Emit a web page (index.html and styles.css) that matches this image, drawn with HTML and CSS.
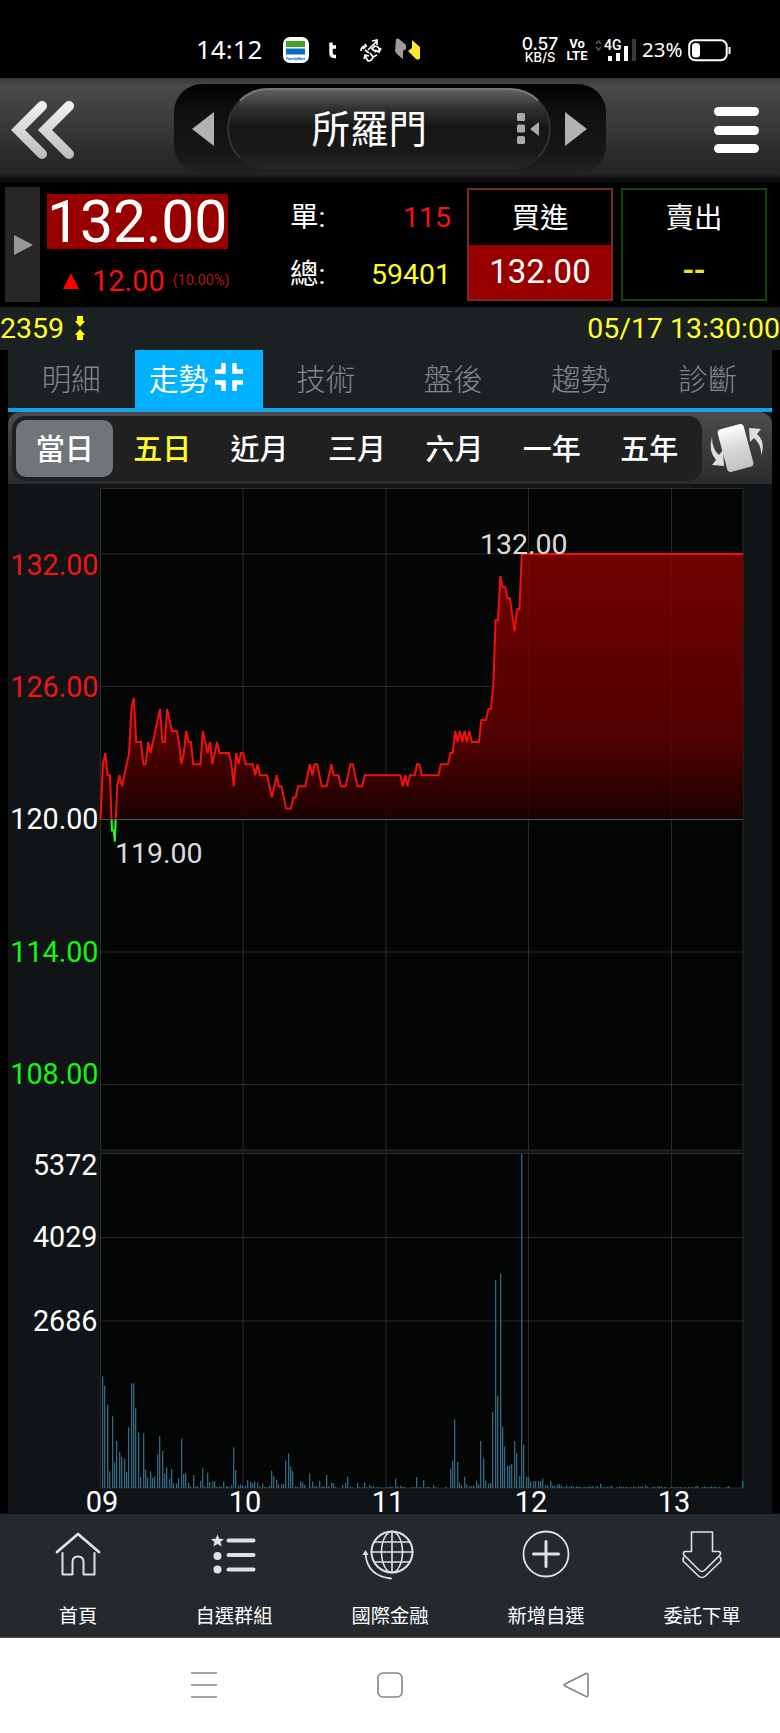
FILE: index.html
```html
<!DOCTYPE html>
<html lang="zh-Hant">
<head>
    <meta charset="utf-8">
    <title>所羅門 2359</title>
    <link rel="stylesheet" href="styles.css">
</head>
<body>
    <div class="status-bar">
        <span class="clock">14:12</span>
        <svg class="status-apps" width="150" height="30" viewBox="0 0 150 30">
            <rect x="2" y="2" width="26" height="26" rx="7" fill="#fff"/>
            <rect x="5" y="6" width="19" height="6" fill="#3fa523"/>
            <rect x="5" y="13.500" width="19" height="6" fill="#0a6fc0"/>
            <text x="5" y="25" class="app-name" textLength="19">FamilyMart</text>
            <path d="M50 7.500v10.500q0 3.500 3.500 3.500h1.500M50 12h5" fill="none" stroke="#fff" stroke-width="3.400"/>
            <g fill="none" stroke="#fff" stroke-width="1.700">
                <path d="M80 16q0-5 5-5l-1-2M85 11l-3 3"/>
                <path d="M87 15l9-9M91 6l5-1v5M84 15l4 3"/>
                <path d="M98 16q1-4-4-5l-3 3 4 3M100 13l-2 4-4-2"/>
                <path d="M84 21l3 5q4 0 5-4l4-2M83 24l1-4 4 1M89 18l3 4"/>
            </g>
            <path d="M115 4q2-1 3 0l7 6v4l-3 2v8q-7-5-8-8z" fill="#9b9b9b"/>
            <path d="M131 5l8 7v11q-1 3-4 1l-6-6-2-2 4-3z" fill="#fbe72c"/>
        </svg>
        <div class="net-speed"><span>0.57</span><span class="unit">KB/S</span></div>
        <div class="volte"><span>Vo</span><span>LTE</span></div>
        <svg class="signal" width="42" height="26" viewBox="0 0 42 26">
            <path d="M1 7l2.500-3 2.500 3M1 10l2.500 3 2.500-3" fill="none" stroke="#555" stroke-width="1.500"/>
            <text x="9" y="13" class="net-type">4G</text>
            <path d="M15 24v-5M23 24v-8M31 24V9" stroke="#fff" stroke-width="4"/>
            <path d="M39 24V2" stroke="#3a3a3a" stroke-width="4"/>
        </svg>
        <span class="battery-text">23%</span>
        <svg class="battery" width="44" height="24" viewBox="0 0 44 24">
            <rect x="1.200" y="2.200" width="37.500" height="20" rx="6" fill="none" stroke="#fff" stroke-width="2"/>
            <rect x="4" y="5" width="8" height="14.500" rx="3.500" fill="#fff"/>
            <path d="M41.500 9v7" stroke="#fff" stroke-width="2"/>
        </svg>
    </div>

    <div class="header">
        <svg class="back" width="64" height="62" viewBox="0 0 64 62">
            <defs>
                <linearGradient id="metal" x1="0" y1="0" x2="0" y2="62" gradientUnits="userSpaceOnUse">
                    <stop offset="0" stop-color="#f6f6f6"/>
                    <stop offset="1" stop-color="#b9b9b9"/>
                </linearGradient>
            </defs>
            <path d="M31 7L7 31l24 24M58 7L34 31l24 24" fill="none" stroke="url(#metal)" stroke-width="10" stroke-linecap="round"/>
        </svg>
        <div class="stock-switch">
            <svg width="22" height="34" viewBox="0 0 22 34"><path d="M22 0v34L0 17z" fill="#b2b2b2"/></svg>
            <div class="stock-name">
                <span>所羅門</span>
                <svg class="list-icon" width="24" height="34" viewBox="0 0 24 34">
                    <rect x="1" y="1" width="8" height="8" rx="1.500" fill="#aaa"/>
                    <rect x="1" y="12.500" width="8" height="8" rx="1.500" fill="#aaa"/>
                    <rect x="1" y="24" width="8" height="8" rx="1.500" fill="#aaa"/>
                    <path d="M23 10v14l-9-7z" fill="#aaa"/>
                </svg>
            </div>
            <svg width="22" height="34" viewBox="0 0 22 34"><path d="M0 0v34l22-17z" fill="#b2b2b2"/></svg>
        </div>
        <div class="menu"><i></i><i></i><i></i></div>
    </div>

    <div class="quote">
        <div class="expander">
            <svg width="19" height="20" viewBox="0 0 19 20"><path d="M0 0v20l19-10z" fill="#999"/></svg>
        </div>
        <div class="price">
            <div class="price-now">132.00</div>
            <div class="price-change">
                <svg width="16" height="16" viewBox="0 0 16 16"><path d="M8 0l8 16H0z" fill="#f00"/></svg>
                <span class="diff">12.00</span>
                <span class="percent">(10.00%)</span>
            </div>
        </div>
        <div class="volume-info">
            <div class="row"><span>單:</span><span class="red">115</span></div>
            <div class="row"><span>總:</span><span class="yellow">59401</span></div>
        </div>
        <div class="order buy">
            <div class="order-title">買進</div>
            <div class="order-price">132.00</div>
        </div>
        <div class="order sell">
            <div class="order-title">賣出</div>
            <div class="order-price">--</div>
        </div>
    </div>

    <div class="info-strip">
        <span>2359</span>
        <svg width="10" height="24" viewBox="0 0 10 24">
            <path d="M2 0h6v5h2l-5 6-5-6h2zM2 24h6v-5h2l-5-6-5 6h2z" fill="#ff0"/>
        </svg>
        <span class="time">05/17 13:30:00</span>
    </div>

    <div class="main">
        <div class="tabs">
            <div class="tab">明細</div>
            <div class="tab active">走勢
                <svg width="28" height="28" viewBox="0 0 28 28">
                    <path d="M0 8.500h8.500V0M19.500 0v8.500h8.500M0 19.500h8.500v8.500M19.500 28v-8.500h8.500" fill="none" stroke="#fff" stroke-width="4.500"/>
                </svg>
            </div>
            <div class="tab">技術</div>
            <div class="tab">盤後</div>
            <div class="tab">趨勢</div>
            <div class="tab">診斷</div>
        </div>
        <div class="range-bar">
            <div class="ranges">
                <div class="range selected">當日</div>
                <div class="range yellow">五日</div>
                <div class="range">近月</div>
                <div class="range">三月</div>
                <div class="range">六月</div>
                <div class="range">一年</div>
                <div class="range">五年</div>
            </div>
            <svg class="rotate" width="56" height="52" viewBox="0 0 56 52">
                <defs>
                    <linearGradient id="card" x1="0" y1="0" x2="0" y2="1">
                        <stop offset="0" stop-color="#fff"/>
                        <stop offset="0.500" stop-color="#d8d8d8"/>
                        <stop offset="1" stop-color="#c2c2c2"/>
                    </linearGradient>
                </defs>
                <rect x="14" y="4" width="27" height="44" rx="4" fill="url(#card)" transform="rotate(-15 27.500 26)"/>
                <path d="M4 15Q0 29 8 38l-4 5 12 1-1-16-4 5Q4 27 4 15z" fill="#dedede"/>
                <path d="M53 34Q58 20 49 12l4-5-12-1 1 14 4-4q8 7 7 18z" fill="#dedede"/>
            </svg>
        </div>
        <svg id="chart" class="chart" width="764" height="1029" viewBox="0 0 764 1029">
            <defs>
                <linearGradient id="upFill" x1="0" y1="70" x2="0" y2="335.500" gradientUnits="userSpaceOnUse">
                    <stop offset="0" stop-color="#840000"/>
                    <stop offset="0.700" stop-color="#5c0000"/>
                    <stop offset="1" stop-color="#1e0000"/>
                </linearGradient>
                <clipPath id="above"><rect x="90" y="0" width="650" height="335.500"/></clipPath>
                <clipPath id="below"><rect x="90" y="335.500" width="650" height="330"/></clipPath>
            </defs>
            <rect class="plot" x="92.500" y="4.500" width="642.500" height="661.500"/>
            <rect class="plot" x="92.500" y="669.500" width="642.500" height="334.500"/>
            <g id="grid"></g>
            <g id="price"></g>
            <g id="volume"></g>
            <g id="labels"></g>
        </svg>
    </div>

    <div class="bottom-nav">
        <div class="nav-item">
            <svg width="50" height="50" viewBox="0 0 50 50">
                <path d="M4 22L25 4l21 18" stroke-width="2.800"/>
                <path d="M9.500 23v21.500h10V32q0-5.500 5.500-5.500t5.500 5.500v12.500h11V23" stroke-width="2"/>
            </svg>
            <span>首頁</span>
        </div>
        <div class="nav-item">
            <svg width="50" height="50" viewBox="0 0 50 50">
                <path class="solid" d="M8.500 4.500l1.800 4.200 4.700.3-3.500 3 1.200 4.600-4.200-2.600-4.200 2.600 1.200-4.600-3.500-3 4.700-.3z"/>
                <circle class="solid" cx="8.500" cy="26" r="4"/>
                <circle class="solid" cx="8.500" cy="39.500" r="4"/>
                <path d="M19.500 10.500h25M19.500 25h25M19.500 39.500h25" stroke-width="4"/>
            </svg>
            <span>自選群組</span>
        </div>
        <div class="nav-item">
            <svg width="54" height="50" viewBox="0 0 54 50">
                <circle cx="29" cy="22" r="20.500" stroke-width="2"/>
                <ellipse cx="29" cy="22" rx="10.500" ry="20.500"/>
                <path d="M29 1.500v41M8.500 22h41M11.500 12h35M11.500 32h35"/>
                <path d="M2.500 23.500q1.500 22.500 25.500 25" stroke-width="1.800"/>
                <path class="solid" d="M2.500 20l3 5h-6z"/>
            </svg>
            <span>國際金融</span>
        </div>
        <div class="nav-item">
            <svg width="50" height="50" viewBox="0 0 50 50">
                <circle cx="25" cy="24" r="22.500" stroke-width="1.800"/>
                <path d="M25 11.500v25M12.500 24h25" stroke-width="3"/>
            </svg>
            <span>新增自選</span>
        </div>
        <div class="nav-item">
            <svg width="50" height="50" viewBox="0 0 50 50">
                <path d="M14.500 2h21v19.500h6.500q3 1 .5 4L28 40q-3 3-6 0L7.500 25.500q-2.500-3 .5-4h6.500z"/>
                <path d="M7 27q-2 3 0 5l14.500 14q3.500 3 7 0l14.500-14q2-2 0-5"/>
            </svg>
            <span>委託下單</span>
        </div>
    </div>

    <div class="system-nav">
        <svg width="28" height="28" viewBox="0 0 28 28"><path d="M1 2h26M1 14h26M1 26h26"/></svg>
        <svg width="28" height="28" viewBox="0 0 28 28"><rect x="2" y="2" width="24" height="24" rx="5"/></svg>
        <svg width="28" height="28" viewBox="0 0 28 28"><path d="M24 2.500L3 13q-2 1 0 2l21 10.500q2 .5 2-1.500V4q0-2-2-1.500z"/></svg>
    </div>

    <script>
        const left = 92.5
        const right = 735
        const perMinute = 2.38
        const baseY = 335.5
        const perPoint = 22.13
        const volumeBase = 1004

        // [minutes since 09:00, price]
        const prices = [
            [0, 120], [1, 122.5], [2, 123], [3, 122], [4, 122], [4.8, 119.5], [5.6, 119.5], [6, 119], [7, 121.5],
            [8, 122], [9, 121.5], [10, 122], [12, 123], [13, 125], [14, 125.5], [15, 123.5], [17, 123.5],
            [18, 122.5], [19, 122.5], [20, 123.5], [21, 123], [25, 125], [26, 123.5], [27, 123.5], [28, 125],
            [30, 124], [32, 124], [33, 123.5], [34, 122.5], [35, 123], [36, 124], [37, 123.5], [38, 123.5],
            [39, 122.5], [42, 122.5], [43, 124], [45, 123], [46, 123.5], [47, 122.5], [49, 123.5], [50, 123],
            [54, 123], [55, 122.5], [56, 121.5], [57, 123], [58, 122.5], [59, 123], [60, 123], [61, 122.5],
            [64, 122.5], [65, 122], [66, 122.5], [67, 122], [70, 122], [72, 121], [74, 122], [75, 121.5],
            [76, 121.5], [78, 120.5], [80, 120.5], [81, 121], [82, 121], [83, 121.5], [86, 121.5], [88, 122.5],
            [89, 122], [90, 122.5], [91, 122.5], [93, 121.5], [95, 121.5], [97, 122.5], [98, 122], [100, 122],
            [101, 121.5], [103, 121.5], [105, 122.5], [106, 122.5], [108, 121.5], [110, 121.5], [111, 122],
            [126, 122], [127, 121.5], [128, 122], [129, 121.5], [130, 122], [132, 122], [133, 122.5],
            [134, 122.5], [135, 122], [142, 122], [143, 122.5], [146, 122.5], [147, 123], [148, 123],
            [149, 124], [150, 123.5], [151, 124], [152, 123.5], [153, 124], [154, 123.5], [155, 124],
            [156, 123.5], [159, 123.5], [160, 124.5], [162, 124.5], [163, 125], [164, 125], [165, 126],
            [166, 129], [167, 129], [168, 131], [169, 130.5], [170, 130.5], [171, 130], [172, 130],
            [174, 128.5], [175, 129.5], [176, 129.5], [177, 132], [270, 132]
        ]

        // one bar a minute, in thirds of a pixel
        const volumes = [
            335, 306, 250, 50, 215, 77, 141, 109, 94, 88, 48, 182, 314, 314, 239, 167, 33, 164, 55, 31,
            50, 31, 35, 101, 155, 111, 43, 62, 28, 57, 14, 14, 28, 148, 42, 44, 16, 5, 39, 5,
            5, 22, 59, 5, 46, 18, 20, 20, 3, 5, 3, 19, 5, 5, 8, 122, 54, 7, 10, 7,
            7, 24, 19, 14, 19, 17, 5, 13, 3, 3, 7, 52, 35, 25, 11, 13, 11, 82, 104, 65,
            50, 5, 3, 20, 17, 9, 0, 43, 19, 5, 5, 22, 3, 5, 39, 5, 16, 14, 3, 0,
            0, 9, 16, 34, 3, 2, 0, 15, 3, 2, 17, 3, 10, 4, 5, 2, 3, 2, 0, 2,
            3, 5, 2, 28, 5, 7, 4, 3, 0, 0, 3, 3, 33, 3, 2, 24, 3, 3, 0, 9,
            3, 0, 0, 0, 4, 0, 58, 82, 206, 78, 16, 8, 34, 11, 6, 5, 7, 22, 11, 141,
            89, 22, 13, 15, 228, 624, 277, 642, 184, 124, 66, 68, 72, 141, 104, 35, 1003, 130, 34, 32,
            20, 20, 21, 21, 20, 28, 9, 7, 22, 7, 7, 11, 11, 6, 3, 7, 5, 6, 4, 5,
            4, 3, 3, 4, 5, 4, 5, 4, 5, 13, 3, 3, 4, 3, 7, 0, 3, 5, 4, 3,
            5, 0, 3, 4, 3, 5, 4, 5, 8, 4, 0, 3, 4, 5, 5, 4, 3, 2, 0, 3,
            2, 3, 2, 3, 2, 2, 3, 2, 3, 5, 6, 0, 3, 5, 2, 3, 5, 5, 3, 4,
            0, 0, 3, 6, 0, 0, 0, 0, 0, 20
        ]

        const x = m => left + m * perMinute
        const y = p => baseY - (p - 120) * perPoint

        function line(x1, y1, x2, y2, name) {
            return `<line class="${name}" x1="${x1}" y1="${y1}" x2="${x2}" y2="${y2}"/>`
        }

        function text(value, tx, ty, name) {
            return `<text class="${name}" x="${tx}" y="${ty}">${value}</text>`
        }

        function drawPrice() {
            const points = prices.map(([m, p]) => `${x(m).toFixed(1)},${y(p).toFixed(1)}`).join(' ')
            const area = `${left},${baseY} ${points} ${right},${baseY}`
            document.getElementById('price').innerHTML =
                `<g clip-path="url(#above)"><polygon points="${area}" fill="url(#upFill)" opacity="0.86"/>` +
                `<polyline class="up" points="${points}"/></g>` +
                `<g clip-path="url(#below)"><polygon points="${area}" fill="#084f0c"/>` +
                `<polyline class="down" points="${points}"/></g>` +
                line(left, baseY, right, baseY, 'base-line')
        }

        function drawVolume() {
            let html = ''
            volumes.forEach((v, i) => {
                const name = i === 269 ? 'bar last' : 'bar'
                const bx = Math.floor(x(i + 1) - 0.3)
                html += `<rect class="${name}" x="${bx}" y="${volumeBase - v / 3}" width="1.3" height="${v / 3}"/>`
            })
            document.getElementById('volume').innerHTML = html
        }

        function drawGrid() {
            let html = ''
            for (const gy of [70, 202.5, 468, 600.5, 753.5, 837]) {
                html += line(left, gy, right, gy, 'grid-line')
            }
            for (const gx of [235, 378, 520.5, 663.5]) {
                html += line(gx, 4.5, gx, 666, 'grid-line')
                html += line(gx, 669.5, gx, 1004, 'grid-line')
            }
            document.getElementById('grid').innerHTML = html
        }

        function drawLabels() {
            let html = ''
            html += text('132.00', 90.5, 91, 'axis red')
            html += text('126.00', 90.5, 212.5, 'axis red')
            html += text('120.00', 90.5, 345, 'axis')
            html += text('114.00', 90.5, 477.5, 'axis green')
            html += text('108.00', 90.5, 599.5, 'axis green')
            html += text('5372', 89.5, 690.5, 'axis')
            html += text('4029', 89.5, 763, 'axis')
            html += text('2686', 89.5, 846.5, 'axis')
            const hours = ['09', '10', '11', '12', '13']
            hours.forEach((h, i) => {
                html += text(h, 94 + i * 143, 1027.5, 'hour')
            })
            html += text('132.00', 472, 70, 'mark')
            html += text('119.00', 107, 378.5, 'mark')
            document.getElementById('labels').innerHTML = html
        }

        drawPrice()
        drawVolume()
        drawGrid()
        drawLabels()
    </script>
</body>
</html>
```

FILE: styles.css
```css
* {
    box-sizing: border-box;
}

body {
    margin: 0;
    width: 780px;
    background: #000;
    color: #fff;
    font-family: Roboto, "Noto Sans CJK TC", sans-serif;
}

svg {
    display: block;
    flex-shrink: 0;
}

.red {
    color: #f01414;
    fill: #f01414;
}

.yellow {
    color: #ffff24;
}

.green {
    fill: #14f514;
}

/* status bar */
.status-bar {
    display: flex;
    align-items: center;
    height: 78px;
    padding: 22px 48px 0 196px;
}

.clock {
    font-family: "Noto Sans", sans-serif;
    font-size: 26px;
    width: 85px;
    margin-top: -2px;
}

.app-name {
    font-size: 4px;
    font-weight: bold;
    fill: #0a6fc0;
}

.net-speed {
    display: flex;
    flex-direction: column;
    align-items: center;
    width: 38px;
    margin-left: 90px;
    margin-top: -1px;
    font-family: Inter, sans-serif;
    font-size: 17.5px;
    line-height: 15px;
    font-weight: 500;
}

.unit {
    font-size: 13px;
    line-height: 13px;
}

.volte {
    display: flex;
    flex-direction: column;
    align-items: center;
    width: 18px;
    margin-left: 9px;
    font-size: 13px;
    line-height: 12px;
    font-weight: bold;
}

.signal {
    margin-left: 9px;
}

.net-type {
    font-size: 14px;
    font-weight: 500;
    fill: #fff;
}

.battery-text {
    margin-left: 5px;
    margin-top: -3px;
    font-family: "Noto Sans", sans-serif;
    font-size: 20.5px;
    width: 41px;
}

.battery {
    margin-left: 5px;
    margin-top: -1px;
}

/* header */
.header {
    display: flex;
    align-items: center;
    justify-content: space-between;
    height: 104px;
    padding: 0 21px 0 11px;
    background: linear-gradient(#3a3a3a, #494949 8%, #3c3c3c 40%, #2a2a2a 75%, #242424 92%, #080808 98%, #141414);
}

.stock-switch {
    display: flex;
    align-items: center;
    justify-content: space-between;
    width: 432px;
    height: 90px;
    margin-right: 10px;
    margin-top: -2px;
    padding: 0 19px 0 18px;
    border-radius: 28px;
    background: linear-gradient(#020202, #111 35%, #161616 75%, #222);
}

.stock-name {
    display: flex;
    align-items: center;
    justify-content: flex-end;
    width: 324px;
    height: 82px;
    padding-right: 9px;
    border: 2px solid #333;
    border-top-color: #777;
    border-bottom-color: #232323;
    border-radius: 41px;
    background: linear-gradient(#606060, #2e2e2e 25%, #161616 48%, #191919 80%, #262626);
    font-size: 38.5px;
    line-height: 44px;
}

.stock-name span {
    margin-top: 1px;
}

.list-icon {
    margin-left: 89px;
}

.menu {
    display: flex;
    flex-direction: column;
    gap: 9.5px;
    width: 45px;
}

.menu i {
    height: 9px;
    border-radius: 5px;
    background: #fff;
}

/* quote */
.quote {
    display: flex;
    height: 125px;
    padding: 5px 12px 5px 5px;
}

.expander {
    display: flex;
    align-items: center;
    width: 35px;
    height: 115px;
    padding-left: 9px;
    background: #272727;
}

.price {
    width: 181px;
    margin-left: 7px;
    padding-top: 7px;
}

.price-now {
    height: 55px;
    line-height: 56px;
    font-size: 59px;
    letter-spacing: -0.2px;
    background: #980000;
}

.price-change {
    display: flex;
    align-items: center;
    height: 63px;
    padding-left: 16px;
    white-space: nowrap;
    color: #f01212;
}

.diff {
    margin-left: 13px;
    font-size: 29px;
}

.percent {
    margin-left: 8px;
    font-size: 14.4px;
    color: #b51616;
}

.volume-info {
    width: 161px;
    margin-left: 62px;
    padding-top: 1px;
    font-size: 28.5px;
}

.row {
    display: flex;
    justify-content: space-between;
    height: 57px;
    line-height: 60px;
}

.order {
    width: 146px;
    height: 113px;
    margin: 1px 0 0 16px;
    border: 2px solid #742c2c;
    text-align: center;
}

.order-title {
    height: 55px;
    font-size: 28.5px;
    line-height: 57px;
}

.order.sell {
    margin-left: 8px;
    border-color: #15440f;
}

.order-price {
    height: 54px;
    font-size: 33px;
    line-height: 54px;
}

.buy .order-price {
    background: #980000;
}

.sell .order-price {
    color: #f1e328;
    line-height: 51px;
    font-weight: 500;
}

.info-strip {
    display: flex;
    align-items: center;
    height: 43px;
    padding-bottom: 1px;
    background: #1b2023;
    color: #ffff24;
    font-size: 28.5px;
}

.info-strip svg {
    margin-left: 11px;
}

.time {
    margin-left: auto;
}

/* tabs */
.main {
    width: 764px;
    margin: 0 8px;
    background: #111417;
}

.tabs {
    display: grid;
    grid-template-columns: repeat(6, 1fr);
    height: 62px;
    background: #1b2023;
    border-bottom: 4px solid #12a3e4;
}

.tab {
    display: flex;
    align-items: center;
    justify-content: center;
    gap: 7px;
    padding-bottom: 4px;
    padding-right: 1px;
    font-size: 29.5px;
    font-weight: 300;
    color: #80878a;
}

.tab.active {
    padding-right: 6px;
    background: #00b1ff;
    color: #fff;
    font-weight: 400;
}

.range-bar {
    display: flex;
    align-items: center;
    height: 72px;
    padding-left: 4px;
    border-radius: 12px 12px 0 0;
    background: linear-gradient(#4c4c4c, #2b2b2b);
}

.ranges {
    display: grid;
    grid-template-columns: repeat(7, 1fr);
    width: 690px;
    height: 65px;
    padding: 4px;
    border-radius: 14px;
    background: #202020;
}

.range {
    display: flex;
    align-items: center;
    justify-content: center;
    padding-bottom: 2px;
    border-radius: 10px;
    font-size: 29px;
    font-weight: 500;
}

.range.selected {
    background: #70757a;
}

.rotate {
    margin-left: 6px;
}

/* chart */
.chart {
    background: #111417;
    overflow: visible;
}

.plot {
    fill: #040606;
    stroke: #2a2c2d;
}

.grid-line {
    stroke: rgba(130, 130, 130, 0.28);
}

.base-line {
    stroke: #4b5a63;
}

.up {
    fill: none;
    stroke: #f01010;
    stroke-width: 2;
}

.down {
    fill: none;
    stroke: #2ef02e;
    stroke-width: 2;
}

.bar {
    fill: #336680;
}

.bar.last {
    fill: #12806f;
}

.axis {
    font-size: 28.7px;
    text-anchor: end;
}

.axis:not(.red):not(.green),
.hour {
    fill: #fff;
}

.hour {
    font-size: 29px;
    text-anchor: middle;
}

.mark {
    font-size: 28.5px;
    fill: #dcdcdc;
}

/* bottom menu */
.bottom-nav {
    display: grid;
    grid-template-columns: repeat(5, 1fr);
    height: 125px;
    background: #24292d;
    border-top: 1px solid #0a0c0d;
    border-bottom: 1px solid #555;
}

.nav-item {
    display: flex;
    flex-direction: column;
    align-items: center;
    padding-top: 16px;
    font-size: 19.3px;
}

.nav-item svg {
    fill: none;
    stroke: #dfe1e2;
    stroke-width: 1.6;
    stroke-linecap: round;
    stroke-linejoin: round;
    overflow: visible;
}

.nav-item .solid {
    fill: #dfe1e2;
    stroke: none;
}

.nav-item span {
    margin-top: 23px;
    line-height: 28px;
}

.system-nav {
    display: flex;
    align-items: center;
    justify-content: center;
    gap: 158px;
    height: 95px;
    padding-bottom: 1px;
    background: #fff;
}

.system-nav svg {
    fill: none;
    stroke: #858585;
    stroke-width: 1.6;
}
```
